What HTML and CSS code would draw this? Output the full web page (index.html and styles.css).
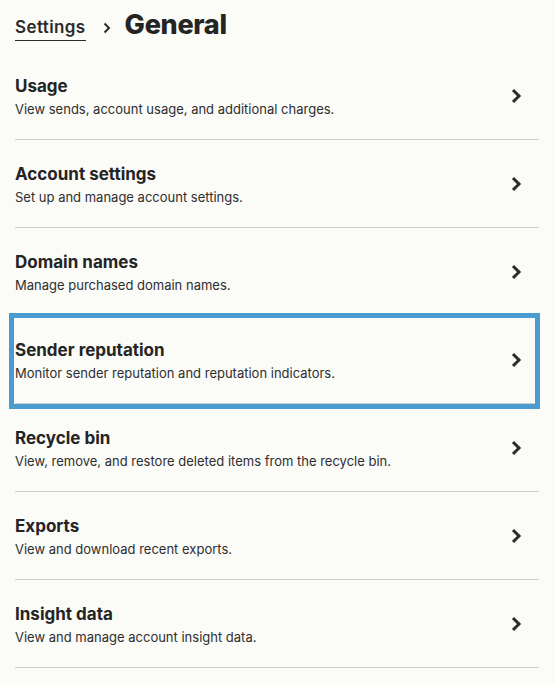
FILE: index.html
```html
<!DOCTYPE html>
<html>
<head>
<meta charset="utf-8">
<link rel="stylesheet" href="styles.css">
</head>
<body>
<div class="page">
  <header class="crumbs">
    <a class="crumb-link">Settings</a>
    <svg class="crumb-sep" width="10" height="12" viewBox="0 0 10 12"><path d="M2.5 1.5 L7 6 L2.5 10.5" fill="none" stroke="#2b2b2b" stroke-width="2"/></svg>
    <h1 class="crumb-title">General</h1>
  </header>
  <ul class="list">
    <li class="row"><div class="text"><div class="title">Usage</div><div class="desc">View sends, account usage, and additional charges.</div></div><svg class="chev" width="12" height="16" viewBox="0 0 12 16"><path d="M3 2 L9 8 L3 14" fill="none" stroke="#2b2b2b" stroke-width="3"/></svg></li>
    <li class="row"><div class="text"><div class="title">Account settings</div><div class="desc">Set up and manage account settings.</div></div><svg class="chev" width="12" height="16" viewBox="0 0 12 16"><path d="M3 2 L9 8 L3 14" fill="none" stroke="#2b2b2b" stroke-width="3"/></svg></li>
    <li class="row"><div class="text"><div class="title">Domain names</div><div class="desc">Manage purchased domain names.</div></div><svg class="chev" width="12" height="16" viewBox="0 0 12 16"><path d="M3 2 L9 8 L3 14" fill="none" stroke="#2b2b2b" stroke-width="3"/></svg></li>
    <li class="row focused"><div class="text"><div class="title">Sender reputation</div><div class="desc">Monitor sender reputation and reputation indicators.</div></div><svg class="chev" width="12" height="16" viewBox="0 0 12 16"><path d="M3 2 L9 8 L3 14" fill="none" stroke="#2b2b2b" stroke-width="3"/></svg></li>
    <li class="row"><div class="text"><div class="title">Recycle bin</div><div class="desc">View, remove, and restore deleted items from the recycle bin.</div></div><svg class="chev" width="12" height="16" viewBox="0 0 12 16"><path d="M3 2 L9 8 L3 14" fill="none" stroke="#2b2b2b" stroke-width="3"/></svg></li>
    <li class="row"><div class="text"><div class="title">Exports</div><div class="desc">View and download recent exports.</div></div><svg class="chev" width="12" height="16" viewBox="0 0 12 16"><path d="M3 2 L9 8 L3 14" fill="none" stroke="#2b2b2b" stroke-width="3"/></svg></li>
    <li class="row"><div class="text"><div class="title">Insight data</div><div class="desc">View and manage account insight data.</div></div><svg class="chev" width="12" height="16" viewBox="0 0 12 16"><path d="M3 2 L9 8 L3 14" fill="none" stroke="#2b2b2b" stroke-width="3"/></svg></li>
  </ul>
</div>
</body>
</html>
```

FILE: styles.css
```css
html, body {
  margin: 0;
  padding: 0;
  background: #fbfbf8;
  color: #242424;
  font-family: Inter, "Liberation Sans", sans-serif;
}
.page {
  padding: 8px 16px 0 15px;
}
.crumbs {
  display: flex;
  align-items: center;
  height: 33px;
}
.crumb-link {
  font-size: 17px;
  font-weight: 600;
  letter-spacing: 0.4px;
  color: #2b2b2b;
  padding-top: 8px;
  padding-bottom: 3px;
  border-bottom: 1px solid #2b2b2b;
}
.crumb-sep {
  margin: 6px 13px 0 16px;
}
.crumb-title {
  margin: 0;
  font-size: 27px;
  font-weight: 800;
  color: #242424;
  letter-spacing: -0.3px;
}
.list {
  list-style: none;
  margin: 11px 0 0 0;
  padding: 0;
}
.row {
  position: relative;
  display: flex;
  align-items: center;
  justify-content: space-between;
  height: 87px;
  border-bottom: 1px solid #cfcfcc;
}
.row.focused::after {
  content: "";
  position: absolute;
  left: -6px;
  right: -1px;
  top: -3px;
  bottom: -6px;
  border: 5px solid #4a9bd0;
}
.text {
  display: flex;
  flex-direction: column;
  gap: 5px;
  padding-top: 1px;
}
.title {
  font-size: 17px;
  font-weight: 700;
  color: #242424;
}
.desc {
  font-size: 13px;
  color: #2e2e2e;
}
.chev {
  margin-right: 17px;
}
```
